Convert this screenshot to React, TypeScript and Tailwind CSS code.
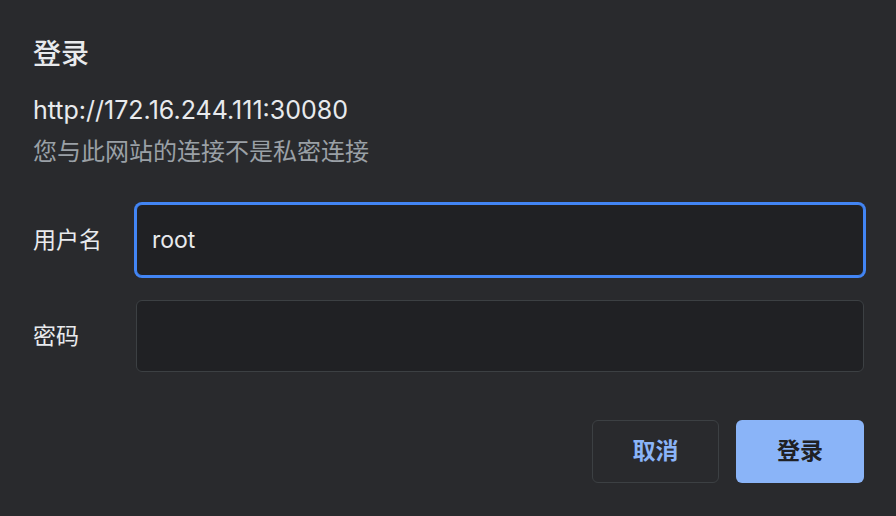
import React from "react";

const font = { fontFamily: 'Inter, "Noto Sans CJK SC", sans-serif' };

function Field({ label, value, focused }: { label: string; value?: string; focused?: boolean }) {
  return (
    <div className="flex items-center">
      <label className="w-[103px] text-[23px] leading-[28px] text-[#e8eaed]">{label}</label>
      <div
        className={
          focused
            ? "flex h-[72px] flex-1 items-center rounded-[6px] border border-[#4285f4] bg-[#202124] pl-[15px] shadow-[0_0_0_2px_#4285f4]"
            : "flex h-[72px] flex-1 items-center rounded-[6px] border border-[#3c4043] bg-[#202124] pl-[15px]"
        }
      >
        <span className="text-[23px] leading-[28px] text-[#e8eaed]">{value}</span>
      </div>
    </div>
  );
}

export default function App() {
  return (
    <div
      style={font}
      className="flex h-[516px] w-[896px] flex-col overflow-hidden bg-[#292a2d] pl-[33px] pr-[32px] pt-[40px]"
    >
      <h1 className="text-[28px] leading-[28px] font-medium text-[#e8eaed]">登录</h1>
      <p className="mt-[28px] text-[25px] leading-[28px] text-[#e8eaed]">http://172.16.244.111:30080</p>
      <p className="mt-[14px] text-[24px] leading-[28px] text-[#9aa0a6]">您与此网站的连接不是私密连接</p>

      <div className="mt-[38px] flex flex-col gap-[24px]">
        <Field label="用户名" value="root" focused />
        <Field label="密码" />
      </div>

      <div className="mt-[48px] flex justify-end gap-[17px]">
        <button className="h-[63px] w-[127px] rounded-[6px] border border-[#3c4043] text-[23px] font-bold text-[#8ab4f8]">
          取消
        </button>
        <button className="h-[63px] w-[128px] rounded-[6px] bg-[#8ab4f8] text-[23px] font-bold text-[#202124]">
          登录
        </button>
      </div>
    </div>
  );
}
